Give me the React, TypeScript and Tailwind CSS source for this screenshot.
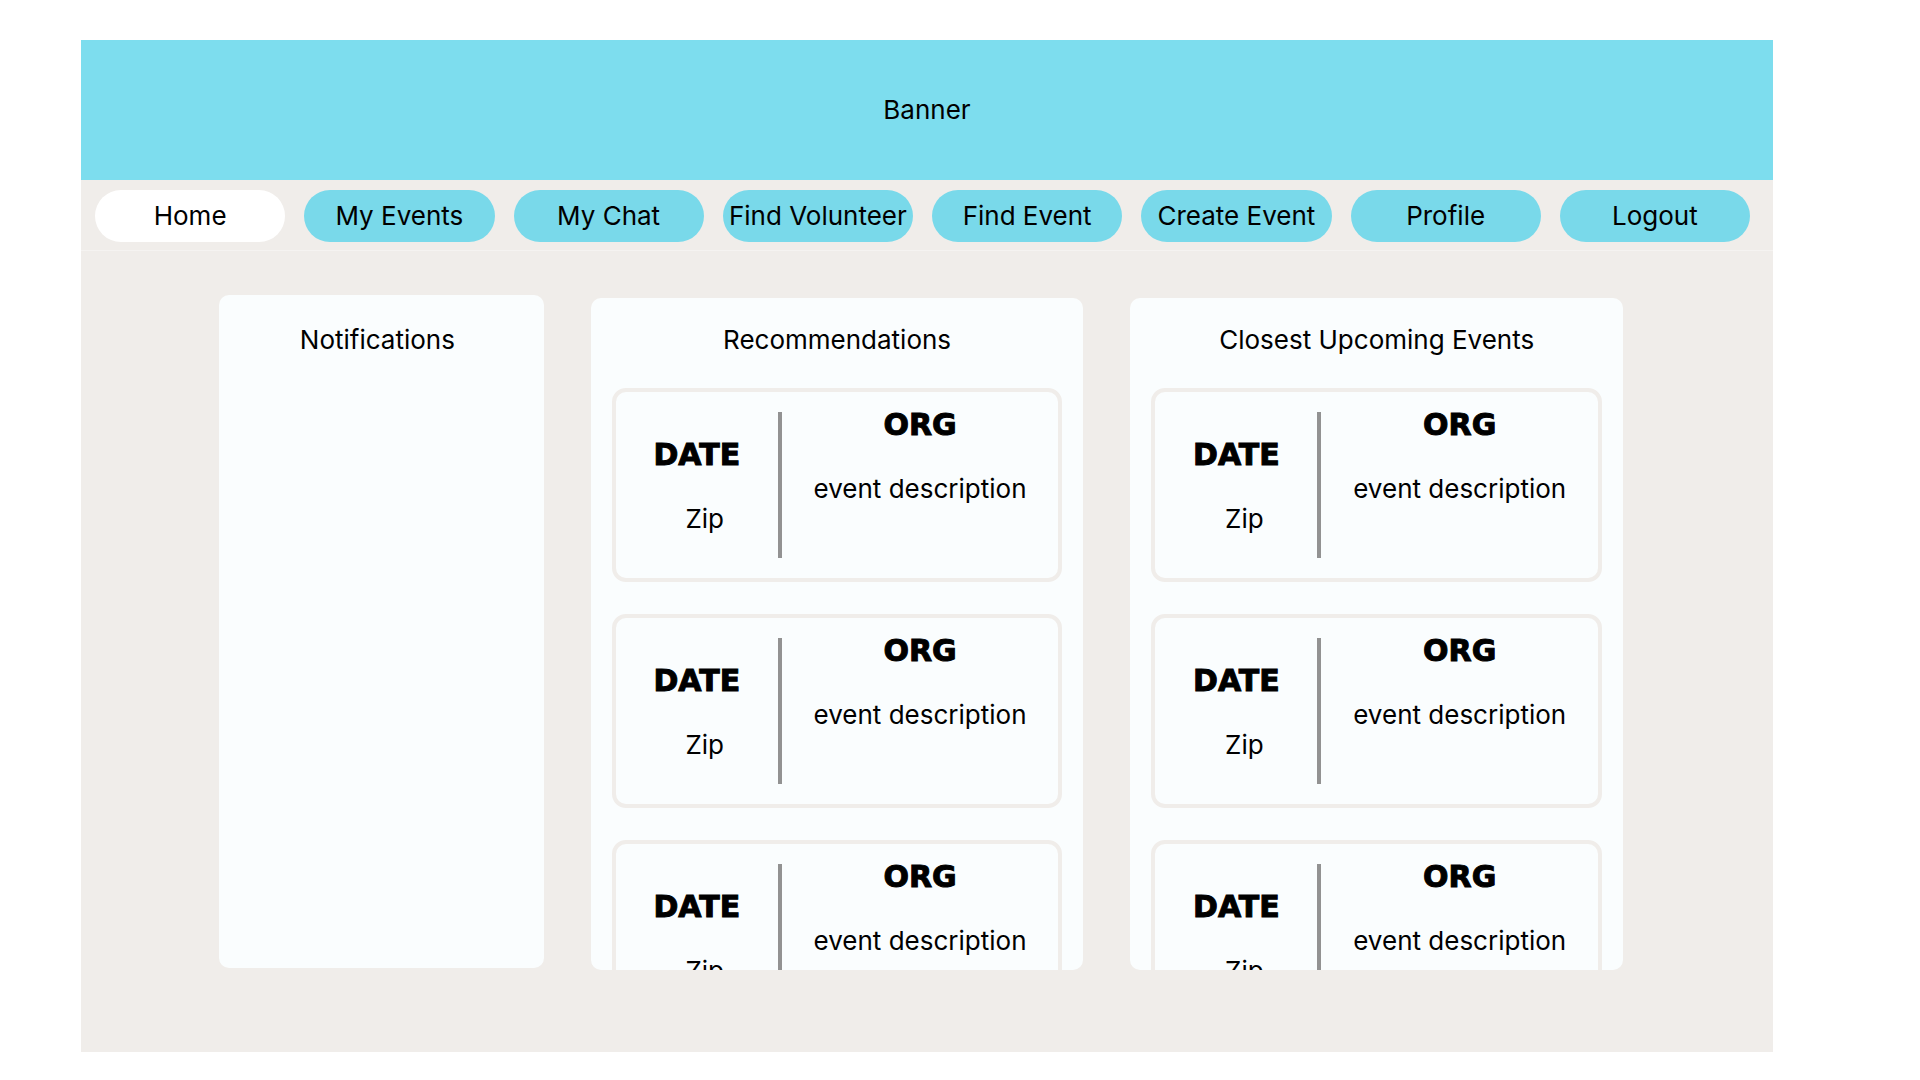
const navItems = [
  'Home',
  'My Events',
  'My Chat',
  'Find Volunteer',
  'Find Event',
  'Create Event',
  'Profile',
  'Logout',
];

function EventCard() {
  return (
    <article className="flex h-[194px] shrink-0 rounded-[14px] border-4 border-[#f0edea] text-center">
      <div className="flex w-[162px] shrink-0 flex-col gap-8 pt-[47px]">
        <p className="font-['DejaVu_Sans',sans-serif] text-[30px] font-black leading-8 [-webkit-text-stroke:1px_black]">
          DATE
        </p>
        <p className="pl-4">Zip</p>
      </div>
      <div className="my-5 w-1 shrink-0 bg-[#929292]" />
      <div className="flex flex-1 flex-col gap-8 pt-[17px]">
        <h3 className="font-['DejaVu_Sans',sans-serif] text-[30px] font-black leading-8 [-webkit-text-stroke:1px_black]">
          ORG
        </h3>
        <p className="whitespace-nowrap">event description</p>
      </div>
    </article>
  );
}

function EventColumn({ title }: { title: string }) {
  return (
    <section className="mt-[3px] flex h-[672px] flex-col gap-8 overflow-hidden rounded-[10px] bg-[#fafdfe] px-[21px] pt-[26px]">
      <h2 className="text-center">{title}</h2>
      <EventCard />
      <EventCard />
      <EventCard />
    </section>
  );
}

export default function App() {
  return (
    <div className="min-h-screen bg-white pt-10 pr-[147px] pb-7 pl-[81px] font-['Inter',sans-serif] text-[26px] leading-8 text-black">
      <header>
        <div className="flex h-[140px] items-center justify-center bg-[#7dddee]">
          <h1>Banner</h1>
        </div>
        <nav className="grid grid-cols-8 gap-[19px] border-b border-[#f5f3f1] bg-[#f0edea] pt-2.5 pr-[23px] pb-2 pl-3.5">
          {navItems.map((item) => (
            <a
              key={item}
              href="#"
              aria-current={item === 'Home' ? 'page' : undefined}
              className={
                item === 'Home'
                  ? 'flex h-[52px] items-center justify-center whitespace-nowrap rounded-full bg-white'
                  : 'flex h-[52px] items-center justify-center whitespace-nowrap rounded-full bg-[#79d9ea]'
              }
            >
              {item}
            </a>
          ))}
        </nav>
      </header>
      <main className="grid grid-cols-[325fr_493fr_493fr] items-start gap-[47px] bg-[#f0edea] pt-11 pr-[150px] pb-[82px] pl-[138px]">
        <section className="h-[673px] rounded-[10px] bg-[#fafdfe] pt-[29px] pr-2">
          <h2 className="text-center">Notifications</h2>
        </section>
        <EventColumn title="Recommendations" />
        <EventColumn title="Closest Upcoming Events" />
      </main>
    </div>
  );
}
